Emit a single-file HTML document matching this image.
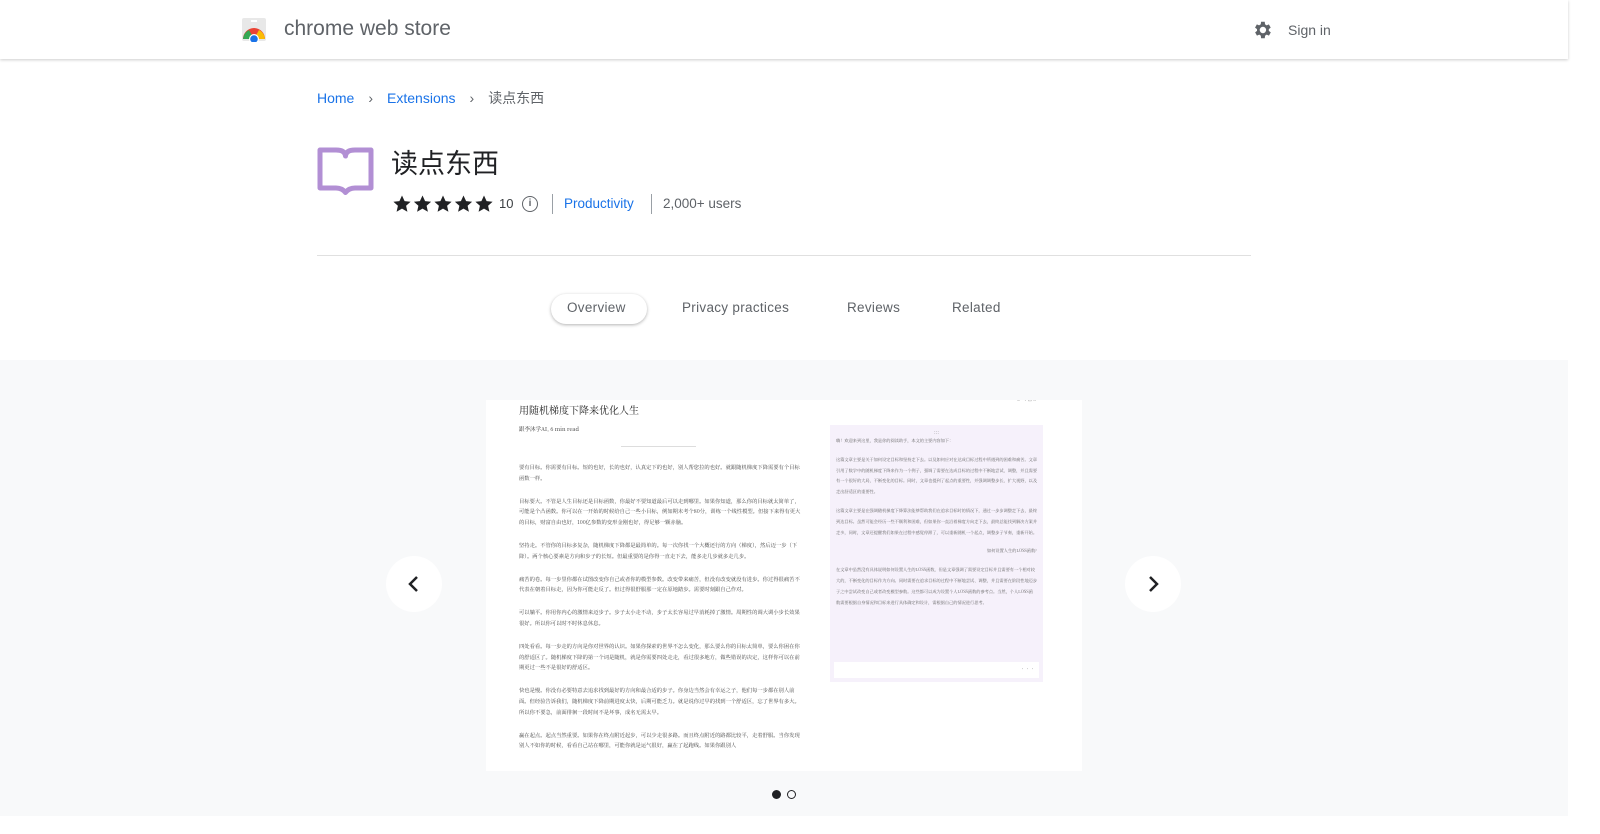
<!DOCTYPE html>
<html><head><meta charset="utf-8"><style>
*{margin:0;padding:0;box-sizing:border-box}
body{width:1600px;height:834px;overflow:hidden;background:#fff;font-family:"Liberation Sans","Noto Sans CJK SC",sans-serif;color:#202124;position:relative}
.a{position:absolute}
.hdr{left:0;top:0;width:1568px;height:59px;background:#fff;box-shadow:0 1px 3px rgba(0,0,0,.2)}
.blue{color:#1a73e8}
.tab{position:absolute;top:300px;font-size:13.5px;color:#5f6368;letter-spacing:.3px}
.band{left:0;top:360px;width:1568px;height:456px;background:#f8f9fa}
.shot{left:486px;top:400px;width:596px;height:371px;background:#fff;overflow:hidden;font-family:"Noto Serif CJK SC","Liberation Serif",serif;color:#333}
.p{font-size:5.3px;line-height:10.8px;width:283px;margin-bottom:12px;color:#444}
.rp{font-size:4.2px;line-height:10.8px;color:#666;margin-bottom:8px}
.arrow{width:56px;height:56px;border-radius:50%;background:#fff;top:556px}
</style></head><body>
<div class="a hdr">
<svg class="a" style="left:241px;top:17px" width="26" height="25" viewBox="0 0 26 25"><rect x="1" y="1" width="24" height="23" rx="2" fill="#e8e8e8"/><rect x="10" y="3" width="6" height="2" fill="#fff"/><path d="M2 22 A11 11 0 0 1 24 22 Z" fill="#ea4335"/><path d="M2 22 A11 11 0 0 1 8 13 L13 22Z" fill="#34a853"/><path d="M24 22 A11 11 0 0 0 18 13 L13 22Z" fill="#fbbc04"/><circle cx="13" cy="22" r="5" fill="#fff"/><circle cx="13" cy="22" r="3.8" fill="#1a73e8"/></svg>
<div class="a" style="left:284px;top:17px;font-size:21px;color:#5f6368">chrome web store</div>
<svg class="a" style="left:1251px;top:19px" width="22" height="22" viewBox="0 0 24 24"><path fill="#5f6368" d="M19.4 13a7.5 7.5 0 0 0 0-2l2.1-1.6-2-3.5-2.5 1a7 7 0 0 0-1.7-1L15 3h-4l-.4 2.9a7 7 0 0 0-1.7 1l-2.5-1-2 3.5L6.6 11a7.5 7.5 0 0 0 0 2l-2.1 1.6 2 3.5 2.5-1a7 7 0 0 0 1.7 1L11 21h4l.4-2.9a7 7 0 0 0 1.7-1l2.5 1 2-3.5zM13 15.5a3.5 3.5 0 1 1 0-7 3.5 3.5 0 0 1 0 7z"/></svg>
<div class="a" style="left:1288px;top:22px;font-size:14px;color:#5f6368">Sign in</div>
</div>
<div class="a" style="left:317px;top:88px;font-size:14px"><span class="blue">Home</span><span style="color:#5f6368;margin:0 14px">›</span><span class="blue">Extensions</span><span style="color:#5f6368;margin:0 14px">›</span><span style="color:#5f6368">读点东西</span></div>
<svg class="a" style="left:317px;top:147px" width="57" height="48" viewBox="0 0 57 48"><path d="M3 3h16q9 0 9.5 6 .5-6 9.5-6h16v38H38q-6 0-9.5 4.5Q25 41 19 41H3z" fill="none" stroke="#b28fd4" stroke-width="5" stroke-linejoin="round"/></svg>
<div class="a" style="left:391px;top:142px;font-size:27px;color:#202124">读点东西</div>
<svg class="a" style="left:393px;top:195px" width="102" height="18" viewBox="0 0 102 18">
<g fill="#202124"><path id="s" d="M9 0.5l2.6 5.6 6 .6-4.5 4 1.3 6L9 13.6 3.6 16.7l1.3-6L.4 6.7l6-.6z"/><use href="#s" x="20.5"/><use href="#s" x="41"/><use href="#s" x="61.5"/><use href="#s" x="82"/></g></svg>
<div class="a" style="left:499px;top:196px;font-size:13px;color:#3c4043">10</div>
<div class="a" style="left:522px;top:196px;width:16px;height:16px;border:1.5px solid #5f6368;border-radius:50%;font-size:10px;text-align:center;line-height:13px;color:#5f6368;font-weight:bold">i</div>
<div class="a" style="left:552px;top:194px;width:1px;height:20px;background:#9aa0a6"></div>
<div class="a blue" style="left:564px;top:196px;font-size:13.5px">Productivity</div>
<div class="a" style="left:651px;top:194px;width:1px;height:20px;background:#9aa0a6"></div>
<div class="a" style="left:663px;top:196px;font-size:13.5px;color:#5f6368">2,000+ users</div>
<div class="a" style="left:317px;top:255px;width:934px;height:1px;background:#e0e0e0"></div>
<div class="a" style="left:551px;top:294px;width:96px;height:30px;border-radius:15px;background:#fff;box-shadow:0 1px 3px rgba(0,0,0,.3)"></div>
<div class="tab blue" style="left:567px">Overview</div>
<div class="tab" style="left:682px">Privacy practices</div>
<div class="tab" style="left:847px">Reviews</div>
<div class="tab" style="left:952px">Related</div>
<div class="a band"></div>
<div class="a shot">
<div class="a" style="left:33px;top:2px;font-size:10px;color:#222">用随机梯度下降来优化人生</div>
<div class="a" style="left:33px;top:25px;font-size:5.5px">跟李沐学AI, 6 min read</div>
<div class="a" style="left:135px;top:46px;width:75px;height:1px;background:#ddd"></div>
<div class="a" style="left:33px;top:62px">
<div class="p">要有目标。你需要有目标。短的也好，长的也好，认真定下的也好，别人帮您拉的也好。就跟随机梯度下降需要有个目标函数一样。</div>
<div class="p">目标要大。不管是人生目标还是目标函数，你最好不要知道最后可以走到哪里。如果你知道，那么你的目标就太简单了，可能是个凸函数。你可以在一开始的时候给自己一些小目标，例如期末考个80分，训练一个线性模型。但接下来得有更大的目标，财富自由也好，100亿参数的变形金刚也好，得足够一颗赤脑。</div>
<div class="p">坚持走。不管你的目标多复杂，随机梯度下降都是最简单的。每一次你找一个大概还行的方向（梯度），然后迈一步（下降）。两个核心要素是方向和步子的长短。但最重要的是你得一直走下去，能多走几步就多走几步。</div>
<div class="p">痛苦的卷。每一步里你都在试图改变你自己或者你的模型参数。改变带来痛苦，但没有改变就没有进步。你过得很痛苦不代表在朝着目标走，因为你可能走反了。但过得很舒服那一定在原地踏步。需要时刻跟自己作对。</div>
<div class="p">可以躺平。你用你内心的激情来迈步子。步子太小走不动，步子太长容易过早消耗掉了激情。周期性的调大调小步长效果很好。所以你可以时不时休息休息。</div>
<div class="p">四处看看。每一步走的方向是你对世界的认识。如果你探索的世界不怎么变化，那么要么你的目标太简单，要么你困在你的舒适区了。随机梯度下降的第一个词是随机，就是你需要四处走走，看过很多地方，做些错误的决定，这样你可以在前期更过一些不是很好的舒适区。</div>
<div class="p">快也是慢。你没有必要特意去追求找到最好的方向和最合适的步子。你身边当然会有幸运之子，他们每一步都在别人前面。但经验告诉我们，随机梯度下降前期进度太快，后期可能乏力。就是说你过早的找到一个舒适区，忘了世界有多大。所以你不要急，前面徘徊一段时间不是坏事，成名无需太早。</div>
<div class="p">赢在起点。起点当然重要。如果你在终点附近起步，可以少走很多路。而且终点附近的路都比较平，走着舒服。当你发现别人不如你的时候，看看自己站在哪里，可能你就是运气很好，赢在了起跑线。如果你跟别人</div>
</div>
<div class="a" style="left:530px;top:-4px;font-size:5px;color:#999">⊕ ↰ ⊡ ⌂</div>
<div class="a" style="left:344px;top:25px;width:213px;height:257px;background:#f6f1fb;padding:4px 6px">
<div style="text-align:center;font-size:5px;color:#888">:::</div>
<div class="rp">嗨！欢迎来到这里，我是你的阅读助手，本文的主要内容如下：</div>
<div class="rp">这篇文章主要是关于如何设定目标和坚持走下去。以及如何应对在达成目标过程中所遇到的困难和痛苦。文章引用了数学中的随机梯度下降来作为一个例子，强调了需要在达成目标的过程中不断地尝试、调整，并且需要有一个很好的大局，不断变化的目标。同时，文章也提到了起点的重要性，并强调调整步长、扩大视野，以及走出舒适区的重要性。</div>
<div class="rp">这篇文章主要是在强调随机梯度下降算法能够帮助我们在追求目标时的情况下，通过一步步调整走下去，最终到达目标。虽然可能会经历一些不顺利和困难，但如果你一直沿着梯度方向走下去，最终总能找到解决方案并走多，同时，文章还提醒我们如果在过程中感觉停滞了，可以重新随机一个起点，调整步子节奏，重新开始。</div>
<div class="rp" style="text-align:right">如何设置人生的LOSS函数?</div>
<div class="rp">在文章中虽然没有具体说明如何设置人生的LOSS函数，但是文章强调了需要设定目标并且需要有一个相对较大的，不断变化的目标作为方向。同时需要在追求目标的过程中不断地尝试、调整，并且需要在阶段性地迈步子之中尝试改变自己或者改变模型参数。这些都可以成为设置个人LOSS函数的参考点。当然，个人LOSS函数需要根据自身情况和目标来进行具体确定和设计，需根据自己的情况进行思考。</div>
<div style="position:absolute;left:4px;right:4px;bottom:4px;height:16px;background:#fff;font-size:5px;text-align:right;padding-right:4px;line-height:16px">•••</div>
</div>
</div>
<div class="a arrow" style="left:386px"><svg width="56" height="56" viewBox="0 0 56 56"><path d="M31 21l-7 7 7 7" fill="none" stroke="#202124" stroke-width="2.5"/></svg></div>
<div class="a arrow" style="left:1125px"><svg width="56" height="56" viewBox="0 0 56 56"><path d="M25 21l7 7-7 7" fill="none" stroke="#202124" stroke-width="2.5"/></svg></div>
<div class="a" style="left:772px;top:790px;width:9px;height:9px;border-radius:50%;background:#202124"></div>
<div class="a" style="left:787px;top:790px;width:9px;height:9px;border-radius:50%;border:1.3px solid #202124"></div>
</body></html>
